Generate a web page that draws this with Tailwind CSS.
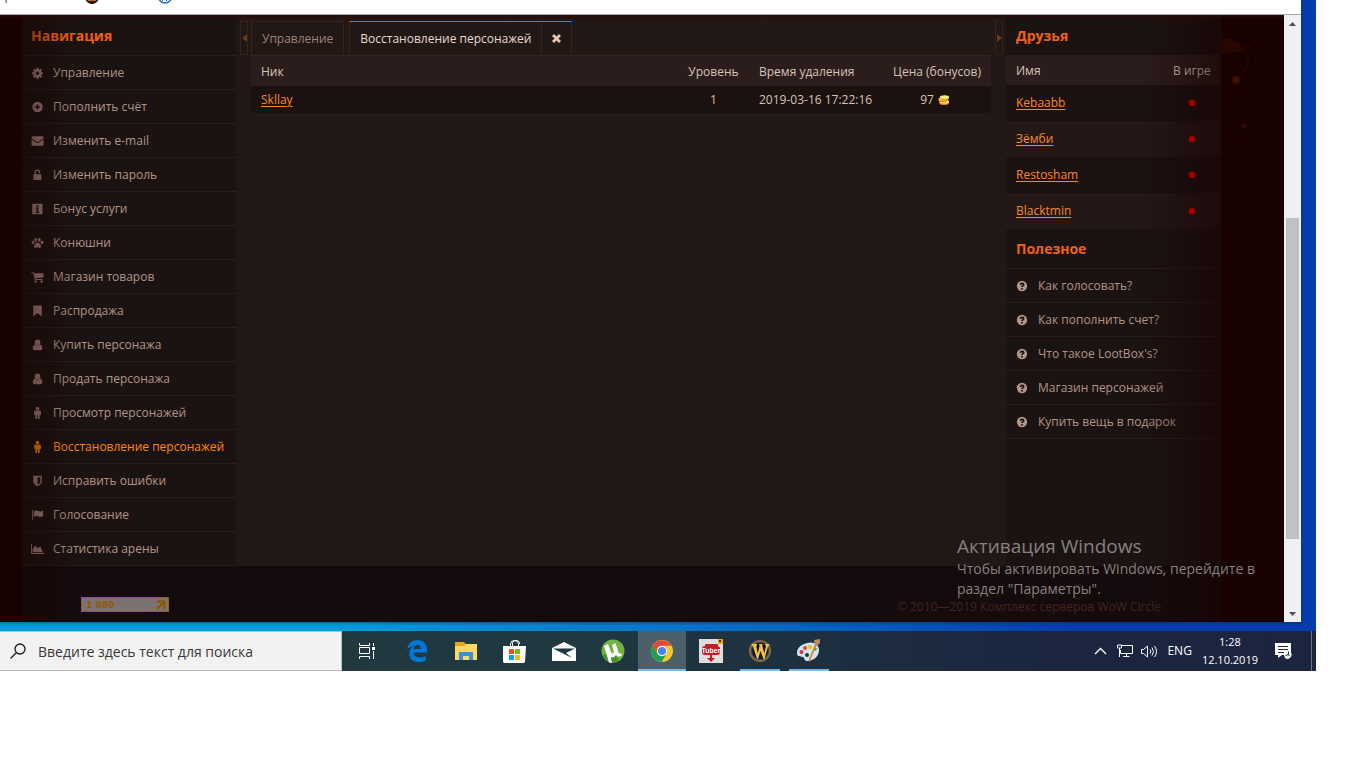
<!DOCTYPE html>
<html lang="ru">
<head>
<meta charset="utf-8">
<title>Восстановление персонажей</title>
<script src="https://cdn.jsdelivr.net/npm/@tailwindcss/browser@4"></script>
</head>
<body class="bg-white font-['Open_Sans','Noto_Sans',sans-serif] text-xs leading-4">

<svg class="hidden" aria-hidden="true">
  <symbol id="cog" viewBox="0 0 14 14"><path fill-rule="evenodd" d="M5.900 1h2.200l.3 1.700 1 .4 1.400-1 1.500 1.500-1 1.400.4 1 1.600.3v2.100l-1.600.3-.4 1 1 1.400-1.500 1.600-1.400-1-1 .4-.3 1.600H5.900l-.3-1.600-1-.4-1.400 1-1.500-1.600 1-1.400-.4-1L.7 8.400V6.300L2.300 6l.4-1-1-1.400 1.500-1.500 1.400 1 1-.4zM7 5.300a2 2 0 1 0 0 4 2 2 0 0 0 0-4z"/></symbol>
  <symbol id="plus" viewBox="0 0 14 14"><path fill-rule="evenodd" d="M7 1a6 6 0 1 0 0 12A6 6 0 0 0 7 1zM6 4h2v2h2v2H8v2H6V8H4V6h2z"/></symbol>
  <symbol id="mail" viewBox="0 0 14 14"><path d="M0 2.800C0 2 .5 1.500 1.200 1.500h11.600c.7 0 1.200.5 1.200 1.200 0 .9-.6 1.500-1.300 2L8.200 7.900c-.8.600-1.600.600-2.400 0L1.300 4.700C.6 4.200 0 3.600 0 2.800zM0 5l5.200 3.800c1.200.9 2.400.9 3.600 0L14 5v6.500c0 .6-.5 1-1 1H1c-.5 0-1-.4-1-1z"/></symbol>
  <symbol id="lock" viewBox="0 0 14 14"><path d="M3.500 6.200V4a3.300 3.300 0 0 1 6.600 0v1H8.700V4a1.900 1.900 0 0 0-3.800 0v2.200h5.800c.4 0 .8.3.8.8v5c0 .5-.4.8-.8.8H3c-.5 0-.8-.3-.8-.8V7c0-.4.300-.8.700-.8z"/></symbol>
  <symbol id="info" viewBox="0 0 14 14"><path fill-rule="evenodd" d="M.8 1h12v12h-12zM5.600 2.500v2h2.800v-2zM5 5.200v1.300h1v3.700H5v1.500h4v-1.500H8V5.200z"/></symbol>
  <symbol id="paw" viewBox="0 0 14 14"><ellipse cx="4.900" cy="3.300" rx="1.600" ry="2.200"/><ellipse cx="9.100" cy="3.300" rx="1.600" ry="2.200"/><ellipse cx="1.800" cy="6.400" rx="1.600" ry="2" transform="rotate(-20 1.800 6.400)"/><ellipse cx="12.200" cy="6.400" rx="1.600" ry="2" transform="rotate(20 12.200 6.400)"/><path d="M7 6.400c2 0 4.100 2.800 4.100 4.700 0 1.300-.9 1.600-1.900 1.600S7.800 12 7 12s-1.300.7-2.300.7-1.800-.400-1.800-1.600C2.900 9.200 5 6.400 7 6.400z"/></symbol>
  <symbol id="cart" viewBox="0 0 14 14"><path d="M0 1.500h2.600l.5 1.200H14v5L5 8.500l.2.900h7.600v1.200H4L2.100 2.700H0z"/><circle cx="5" cy="12.200" r="1.400"/><circle cx="11.800" cy="12.200" r="1.400"/></symbol>
  <symbol id="mark" viewBox="0 0 14 14"><path d="M2 1.500C2 1 2.400.5 3 .5h8c.6 0 1 .5 1 1V13.300L7 9.300l-5 4z"/></symbol>
  <symbol id="user" viewBox="0 0 14 14"><circle cx="7" cy="4" r="3.300"/><path d="M4 6.300c2 1.600 4 1.600 6 0 1.700.4 2.600 2.200 2.600 4.200 0 1.500-.8 2.500-1.900 2.500H3.300c-1.100 0-1.900-1-1.900-2.500 0-2 .9-3.800 2.600-4.200z"/></symbol>
  <symbol id="male" viewBox="0 0 14 14"><circle cx="7" cy="1.900" r="2"/><path d="M4.500 4h5c.8 0 1.500.7 1.500 1.500v3.300c0 1-1.400 1-1.400 0V13c0 1.300-2.200 1.300-2.200 0V9.500h-.8V13c0 1.300-2.200 1.300-2.200 0V8.800c0 1-1.400 1-1.400 0V5.500C3 4.700 3.700 4 4.500 4z"/></symbol>
  <symbol id="shield" viewBox="0 0 14 14"><path fill-rule="evenodd" d="M2 1h10v6.200c0 2.800-2.700 4.700-5 5.800-2.300-1.100-5-3-5-5.800zM7 2.500v8.800c2-1.200 3.400-2.400 3.400-4.100V2.500z"/></symbol>
  <symbol id="flag" viewBox="0 0 14 14"><path d="M.3 1.300h1.400V13H.8V3zM2.500 2.900C5.300 1.200 6.800 1.700 8.200 2.400c1.900.9 3.400.4 5.300-.6v6.300c-1.900 1-3.600 1.500-5.400.6-1.700-.8-3.300-.6-5.600.700z"/></symbol>
  <symbol id="chart" viewBox="0 0 16 14"><path d="M0 1h1.200v11H16v1.200H0zM2 11V7l3-4 3.500 3L11.500 4l3 7z"/></symbol>
  <symbol id="help" viewBox="0 0 14 14"><path fill-rule="evenodd" d="M7 1a6 6 0 1 0 0 12A6 6 0 0 0 7 1zM4.300 5.400C4.500 3.900 5.600 3 7.100 3c1.600 0 2.800.9 2.800 2.300 0 1.900-1.800 1.900-1.800 3H6c0-1.900 1.700-2.100 1.700-2.900 0-.7-1.200-.7-1.500.300zM6 9.200h2.100v1.900H6z"/></symbol>
</svg>

<div class="mr-[50px] bg-[linear-gradient(90deg,#009bdc_0%,#009bdc_25%,#0067c2_60%,#063cae_82%,#063cae_100%)]">
  <!-- Browser window -->
  <div class="mr-[15px] bg-white shadow-[0_1px_3px_#00205080]">
    <div class="h-[14px] overflow-hidden">
      <svg width="180" height="5" viewBox="0 0 180 5" aria-hidden="true"><path d="M5 0h1v3H5z" fill="#f0b070"/><path d="M6 0h1v3H6z" fill="#3d9be0"/><circle cx="92" cy="-3" r="7" fill="#20150d"/><path d="M88 0l2 1 2-1 2 1 2-1" stroke="#e08a20" fill="none"/><circle cx="165" cy="-3.500" r="6.500" fill="#fff" stroke="#2c6ecb" stroke-width="1.500"/><path d="M162 0h1v1h-1zM166 0h1v1h-1z" fill="#2c6ecb"/></svg>
    </div>
    <div class="flex border-t border-[#a8a8a8]">
      <div class="relative min-w-0 flex-1 bg-[#170101]">
        <div class="relative mr-[63px] ml-[22px] flex bg-[#211715]">
          <!-- Navigation -->
          <nav class="w-[214px] shrink-0 bg-[#1b1311] text-[#b39488]">
            <h2 class="flex h-10 items-center pt-0.5 pl-[9px] text-sm font-bold text-[#f26110]">Навигация</h2>
            <ul class="border-b border-[#2a1d1a] fill-[#a07c74] [&_a]:flex [&_a]:h-[34px] [&_a]:items-center [&_a]:gap-[9px] [&_a]:border-t [&_a]:border-[#2a1d1a] [&_a]:pl-[9px] [&_svg]:h-3 [&_svg]:w-[13px]">
              <li><a href="#"><svg><use href="#cog"/></svg>Управление</a></li>
              <li><a href="#"><svg><use href="#plus"/></svg>Пополнить счёт</a></li>
              <li><a href="#"><svg><use href="#mail"/></svg>Изменить e-mail</a></li>
              <li><a href="#"><svg><use href="#lock"/></svg>Изменить пароль</a></li>
              <li><a href="#"><svg><use href="#info"/></svg>Бонус услуги</a></li>
              <li><a href="#"><svg><use href="#paw"/></svg>Конюшни</a></li>
              <li><a href="#"><svg><use href="#cart"/></svg>Магазин товаров</a></li>
              <li><a href="#"><svg><use href="#mark"/></svg>Распродажа</a></li>
              <li><a href="#"><svg><use href="#user"/></svg>Купить персонажа</a></li>
              <li><a href="#"><svg><use href="#user"/></svg>Продать персонажа</a></li>
              <li><a href="#"><svg><use href="#male"/></svg>Просмотр персонажей</a></li>
              <li class="fill-[#f08008] text-[#ff8800]"><a href="#" aria-current="page"><svg><use href="#male"/></svg>Восстановление персонажей</a></li>
              <li><a href="#"><svg><use href="#shield"/></svg>Исправить ошибки</a></li>
              <li><a href="#"><svg><use href="#flag"/></svg>Голосование</a></li>
              <li><a href="#"><svg><use href="#chart"/></svg>Статистика арены</a></li>
            </ul>
          </nav>

          <div class="flex w-[15px] shrink-0 items-start pt-1.5 pl-1">
            <button aria-label="Свернуть навигацию" class="flex h-[34px] w-2 items-center justify-center border border-[#35221f]"><svg class="h-2 w-[5px] shrink-0 fill-[#6b3a18]" viewBox="0 0 5 8"><path d="M5 0v8L0 4z"/></svg></button>
          </div>

          <!-- Content -->
          <main class="min-w-0 flex-1 pt-1.5">
            <div class="flex h-[34px] gap-[5px] text-[#9f8379]">
              <a href="#" class="flex items-center border border-b-0 border-[#35221f] px-[10px]">Управление</a>
              <div class="flex border border-b-0 border-[#35221f] border-t-[#d8600c] text-[#e8dad0]">
                <a href="#" class="flex items-center px-[10px]">Восстановление персонажей</a>
                <button aria-label="Закрыть вкладку" class="flex w-[30px] items-center justify-center border-l border-[#35221f]"><svg class="size-[9px]" viewBox="0 0 9 9"><path d="M1 1l7 7M8 1L1 8" stroke="#e8c8b4" stroke-width="2.800"/></svg></button>
              </div>
            </div>
            <table class="w-full border-t border-[#35221f] text-[#d8c4b8]">
              <thead><tr class="h-[30px] bg-[#2b1d1c]">
                <th class="px-[10px] pt-0.5 text-left font-normal">Ник</th>
                <th class="w-[71px] pt-0.5 font-normal whitespace-nowrap">Уровень</th>
                <th class="w-[134px] px-[10px] pt-0.5 text-left font-normal whitespace-nowrap">Время удаления</th>
                <th class="w-[108px] pt-0.5 font-normal whitespace-nowrap">Цена (бонусов)</th>
              </tr></thead>
              <tbody><tr class="h-[27px] bg-[#1b110f]">
                <td class="px-[10px] pt-0.5"><a href="#" class="text-[#f58a2a] underline underline-offset-2">Skllay</a></td>
                <td class="pt-0.5 text-center">1</td>
                <td class="px-[10px] pt-0.5 whitespace-nowrap">2019-03-16 17:22:16</td>
                <td class="pt-0.5 pr-1"><span class="flex items-center justify-center gap-1">97 <svg width="12" height="10" viewBox="0 0 12 10" aria-label="бонусов"><ellipse cx="6" cy="7.500" rx="5" ry="2.500" fill="#e89418"/><ellipse cx="6.500" cy="6.500" rx="4.500" ry="2" fill="#ffe070"/><ellipse cx="5" cy="5" rx="4.500" ry="2.200" fill="#e08410"/><ellipse cx="5" cy="4" rx="4.500" ry="1.800" fill="#ffc848"/><ellipse cx="6.500" cy="3" rx="4.500" ry="2.300" fill="#f0a020"/><ellipse cx="6.500" cy="2" rx="4.500" ry="1.800" fill="#fff088"/></svg></span></td>
              </tr></tbody>
            </table>
          </main>

          <div class="flex w-[15px] shrink-0 items-start pt-1.5 pl-1">
            <button aria-label="Свернуть панель друзей" class="flex h-[34px] w-2 items-center justify-center border border-[#35221f]"><svg class="h-2 w-[5px] shrink-0 fill-[#6b3a18]" viewBox="0 0 5 8"><path d="M0 0v8l5-4z"/></svg></button>
          </div>

          <!-- Friends and help -->
          <aside class="w-[215px] shrink-0 bg-[#1b1311] text-[#b39488]">
            <h2 class="flex h-10 items-center pt-0.5 pl-[10px] text-sm font-bold text-[#f26110]">Друзья</h2>
            <table class="w-full">
              <thead><tr class="h-[30px] bg-[#2b1d1c] text-[#d8c4b8]"><th class="px-[10px] pt-0.5 text-left font-normal">Имя</th><th class="w-[58px] pt-0.5 font-normal">В игре</th></tr></thead>
              <tbody class="text-[#f58a2a]">
                <tr class="h-9 bg-[#1b110f]"><td class="px-[10px]"><a href="#" class="underline underline-offset-2">Kebaabb</a></td><td><span class="mx-auto block size-1.5 rounded-full bg-[#ff0000] shadow-[0_0_2px_#c00000]"></span></td></tr>
                <tr class="h-9 bg-[#231816]"><td class="px-[10px]"><a href="#" class="underline underline-offset-2">Зёмби</a></td><td><span class="mx-auto block size-1.5 rounded-full bg-[#ff0000] shadow-[0_0_2px_#c00000]"></span></td></tr>
                <tr class="h-9 bg-[#1b110f]"><td class="px-[10px]"><a href="#" class="underline underline-offset-2">Restosham</a></td><td><span class="mx-auto block size-1.5 rounded-full bg-[#ff0000] shadow-[0_0_2px_#c00000]"></span></td></tr>
                <tr class="h-9 bg-[#231816]"><td class="px-[10px]"><a href="#" class="underline underline-offset-2">Blacktmin</a></td><td><span class="mx-auto block size-1.5 rounded-full bg-[#ff0000] shadow-[0_0_2px_#c00000]"></span></td></tr>
              </tbody>
            </table>
            <h2 class="flex h-[39px] items-center pl-[10px] text-sm font-bold text-[#f26110]">Полезное</h2>
            <ul class="border-b border-[#2a1d1a] fill-[#b39488] [&_a]:flex [&_a]:h-[34px] [&_a]:items-center [&_a]:gap-[10px] [&_a]:border-t [&_a]:border-[#2a1d1a] [&_a]:pl-[10px] [&_svg]:size-3">
              <li><a href="#"><svg><use href="#help"/></svg>Как голосовать?</a></li>
              <li><a href="#"><svg><use href="#help"/></svg>Как пополнить счет?</a></li>
              <li><a href="#"><svg><use href="#help"/></svg>Что такое LootBox's?</a></li>
              <li><a href="#"><svg><use href="#help"/></svg>Магазин персонажей</a></li>
              <li><a href="#"><svg><use href="#help"/></svg>Купить вещь в подарок</a></li>
            </ul>
          </aside>
        </div>

        <footer class="relative mr-[63px] ml-[22px] flex h-14 items-start justify-between bg-[#150b0d] pt-[31px] pr-[60px] pl-[59px]">
          <a href="#" class="flex h-[15px] w-[88px] items-center justify-between border border-[#94600c] bg-[#7d7272] pr-0.5 pl-1 font-['DejaVu_Sans',sans-serif] text-[9px] leading-3 font-bold text-[#8f5a00]">1 880<svg class="size-[10px]" viewBox="0 0 10 10"><path d="M1 1.500h7.500V9M8 2L1 9" fill="none" stroke="#8a5600" stroke-width="2.200"/></svg></a>
          <p class="pt-0.5 text-[#43241f]">© 2010—2019 Комплекс серверов WoW Circle</p>
        </footer>

        <div class="pointer-events-none absolute inset-y-0 left-0 w-20 bg-linear-to-r from-[#170101]/65 to-[#170101]/0"></div>
        <div class="pointer-events-none absolute inset-y-0 right-0 w-36 bg-linear-to-l from-[#170101] to-[#170101]/0"></div>
        <div class="pointer-events-none absolute inset-x-0 top-0 h-1 bg-linear-to-b from-[#2a0a08] to-transparent"></div>

        <!-- Ember streaks in the page background -->
        <svg class="pointer-events-none absolute top-0 right-0 blur-[1px]" width="63" height="160" viewBox="0 0 63 160" fill="none" stroke="#5a1c08" aria-hidden="true"><path d="M0 25c8-3 18 3 20 11M0 37c10 1 15-2 20-1 6-4 12-9 20-15M22 36l-5-8M28 40c-3 12-4 20-14 26" opacity=".5"/><path d="M0 25c8-3 18 3 20 11l-20 1z" fill="#401005" stroke="none" opacity=".4"/><path d="M0 74c15 4 30 5 45 8M2 85c10 4 18 9 25 18M4 118c12 3 22 10 34 20" opacity=".25"/><circle cx="15" cy="65" r="4" fill="#6a2208" stroke="none" opacity=".5"/><circle cx="23" cy="111" r="3" fill="#5a1c08" stroke="none" opacity=".35"/></svg>
        <svg class="pointer-events-none absolute top-0 left-0" width="22" height="170" viewBox="0 0 22 170" fill="none" stroke="#4a1208" opacity=".2" aria-hidden="true"><path d="M22 60C8 70 2 85 0 95M22 108c-8 4-6 12 0 16M20 145l-12 14"/></svg>

        <!-- Activation watermark -->
        <div class="pointer-events-none absolute right-0 bottom-[23px] w-[327px] text-sm leading-5 text-[#87817f]">
          <p class="-mt-px mb-px text-[19px] leading-6">Активация Windows</p>
          <p>Чтобы активировать Windows, перейдите в<br>раздел "Параметры".</p>
        </div>
      </div>

      <!-- Scrollbar -->
      <div class="flex w-[17px] shrink-0 flex-col bg-[#f0f0f0]">
        <button aria-label="Прокрутить вверх" class="flex h-[17px] items-center justify-center"><svg width="7" height="4" viewBox="0 0 7 4"><path d="M0 4l3.500-4L7 4z" fill="#505050"/></svg></button>
        <div class="flex-[186]"></div>
        <div class="mx-0.5 flex-[321] bg-[#c1c1c1]"></div>
        <div class="flex-[66]"></div>
        <button aria-label="Прокрутить вниз" class="flex h-[17px] items-center justify-center"><svg width="7" height="4" viewBox="0 0 7 4"><path d="M0 0l3.500 4L7 0z" fill="#505050"/></svg></button>
      </div>
    </div>
  </div>

  <!-- Taskbar -->
  <div class="mt-[9px] flex h-10 items-stretch bg-linear-to-r from-[#203840] from-45% to-[#1b2540] to-80% text-white">
    <label class="flex w-[342px] shrink-0 items-center gap-3 border border-l-0 border-[#bcbcbc] bg-[#f2f2f2] pl-[10px]">
      <svg class="size-4 shrink-0" viewBox="0 0 16 16" fill="none" stroke="#1a1a1a" stroke-width="1.300"><circle cx="10" cy="6" r="5"/><path d="M6.500 9.500L.5 15.500"/></svg>
      <input type="text" aria-label="Поиск" placeholder="Введите здесь текст для поиска" class="min-w-0 flex-1 bg-transparent pt-0.5 text-sm placeholder:text-[#383838]">
    </label>
    <div class="flex gap-px pl-0.5">
      <button aria-label="Представление задач" class="grid w-12 place-items-center pr-0.5"><svg width="18" height="16" viewBox="0 0 18 16" fill="none" stroke="#fff"><path d="M1.500 0v2.500h10V0M1.500 16v-2.500h10V16M1.500 4.500h10v6h-10zM15.500 0v3M15.500 8v8"/><path d="M14 4h3v3h-3z" fill="#fff" stroke="none"/></svg></button>
      <button aria-label="Edge" class="grid w-12 place-items-center"><svg width="20" height="22" viewBox="0 0 20 22"><path d="M0 9.500C1 3.800 5 0 10.300 0 16.500 0 20 4.600 20 10v2.500H6.500c.3 3.600 3.300 5 6.500 5 2.200 0 4-.5 5.700-1.500v4.500c-2 1-4.300 1.500-6.700 1.500C6 22 2.200 18.600 2.200 13.500c0-3.500 2-6.300 5-7.800C4.300 5.900 1.700 7.400 0 9.500zm6.600-.6h7.300c0-2.500-1.400-3.900-3.500-3.900-2 0-3.500 1.600-3.800 3.900z" fill="#0078d7"/></svg></button>
      <button aria-label="Проводник" class="grid w-12 place-items-center"><svg width="22" height="18" viewBox="0 0 22 18"><path d="M0 0h9l2 2h11v16H0z" fill="#e8a317"/><path d="M0 4h9l2-2h11v16H0z" fill="#ffd766"/><path d="M4 10h14v8h-4v-4H8v4H4z" fill="#3f8fd8"/></svg></button>
      <button aria-label="Магазин" class="grid w-12 place-items-center pr-0.5"><svg width="23" height="23" viewBox="0 0 23 23"><path d="M0 6h23l-1 16-1 1H1l-1-1z" fill="#fff"/><path d="M7.500 7V4a4 3.500 0 0 1 8 0v3M9.500 6V3a3 2.500 0 0 1 7 1" fill="none" stroke="#fff"/><path d="M6 9h5v5H6z" fill="#f25022"/><path d="M12 9h5v5h-5z" fill="#7fba00"/><path d="M6 15h5v5H6z" fill="#00a4ef"/><path d="M12 15h5v5h-5z" fill="#ffb900"/></svg></button>
      <button aria-label="Почта" class="grid w-12 place-items-center"><svg width="24" height="19" viewBox="0 0 24 19"><path d="M0 6l12-6 12 6v13H0z" fill="#fff"/><path d="M1 6.500h22L14 11l6 5z" fill="#203840"/></svg></button>
      <button aria-label="µTorrent" class="grid w-12 place-items-center"><svg width="24" height="24" viewBox="0 0 24 24"><circle cx="12" cy="12" r="11.500" fill="#6fb344"/><path d="M1 16C5 22 12 25 18 21l-6-7z" fill="#498c2e"/><path d="M3 7l4-2 3 8c.8 2 3.200 1.500 2.800-.5L11 6l3.500-2 3 9.500c.5 1.200 1.500 1.300 2.500.5l1 2.500c-2 1.700-5 1.300-6-1-1 3-3.700 3.500-5.500 2.500L11 24l-3-.5z" fill="#fff"/></svg></button>
      <button aria-label="Chrome" class="grid w-12 place-items-center border-b-2 border-[#76b9ed] bg-[#4d5f68] pt-0.5"><svg width="22" height="22" viewBox="0 0 22 22"><circle cx="11" cy="11" r="11" fill="#fbc62a"/><path d="M1.500 5.500A11 11 0 0 1 20.500 5.800H11a5.200 5.200 0 0 0-5 6.500z" fill="#dd4b3e"/><path d="M1.500 5.500A11 11 0 0 0 10.600 22l4.600-7.800A5.200 5.200 0 0 1 6.300 13.300z" fill="#1c9d59"/><circle cx="11" cy="11" r="5" fill="#fff"/><circle cx="11" cy="11" r="4" fill="#4586f3"/></svg></button>
      <button aria-label="Tuber" class="grid w-12 place-items-center"><svg width="24" height="24" viewBox="0 0 24 24"><path d="M0 0h24v24H0z" fill="#dedede"/><path d="M19 0h5v5h-5z" fill="#f0a800"/><path d="M20 1h2v2h-2z" fill="#403000"/><rect x="6" y="5" width="13" height="4" rx="1" fill="#c41c22"/><rect x="3" y="7" width="18" height="9" rx="3" fill="#c41c22"/><path d="M11 16h2v3h3l-4 4-4-4h3z" fill="#c41c22"/><text x="12" y="14" text-anchor="middle" font-family="Liberation Sans Narrow, Liberation Sans" font-size="7" font-weight="bold" fill="#fff">Tuber</text></svg></button>
      <button aria-label="World of Warcraft" class="mx-1 grid w-10 place-items-center border-b-2 border-[#76b9ed] pt-0.5"><svg width="24" height="24" viewBox="0 0 24 24"><circle cx="12" cy="12" r="10" fill="#0d1526" stroke="#8a6a3c" stroke-width="2"/><circle cx="12" cy="12" r="8.500" fill="none" stroke="#3c4f70"/><path d="M3 5h6v1L8.300 7.500l1.500 7L11.500 7 11 5h3.500l-.3 1 2 8.500L18 7.300 17 5h5l-2 2.500L16.500 20h-1L12.500 12 10 20H9L5 7.500z" fill="#f3c13a"/></svg></button>
      <button aria-label="Paint" class="mx-1 grid w-10 place-items-center border-b-2 border-[#76b9ed] pt-0.5"><svg width="24" height="24" viewBox="0 0 24 24"><path d="M10 4c7-2 12 2 12 7 0 7-6 11-12 11-3 0-2-3-4-4-3-1-6 0-6-4C0 9 4 5.500 10 4z" fill="#cfe7f5"/><circle cx="4.500" cy="13" r="2" fill="#e0352c"/><circle cx="8" cy="9" r="2" fill="#d84a3a"/><circle cx="13" cy="8" r="2.300" fill="#f5c518"/><circle cx="18" cy="10" r="1.800" fill="#48a23a"/><circle cx="10" cy="16" r="2" fill="#203840"/><path d="M20 5l-7 17-1 1V20l6-15z" fill="#d9822b"/><path d="M17 1l6-1v4l-3 3-2-1z" fill="#b98a68"/></svg></button>
    </div>
    <div class="ml-auto flex items-center">
      <button aria-label="Скрытые значки" class="mr-[10px]"><svg width="13" height="8" viewBox="0 0 13 8"><path d="M1 7l5.500-5.500L12 7" fill="none" stroke="#fff" stroke-width="1.300"/></svg></button>
      <button aria-label="Сеть" class="mr-2"><svg width="16" height="14" viewBox="0 0 16 14" fill="none" stroke="#fff"><path d="M5 1.500h10.500v8H3.500V6M9.500 9.500v3M6 12.500h6.500M.5 1h4v3h-4zM2.500 4v9"/></svg></button>
      <button aria-label="Громкость" class="mr-[9px]"><svg width="17" height="13" viewBox="0 0 17 13" fill="none" stroke="#fff"><path d="M.5 4.500h2l4-3.500v11l-4-3.500h-2zM9 4.500q1.500 2 0 4M11 2.500q3 4 0 8M13.500 1q4 5.500 0 11"/></svg></button>
      <button class="mr-[10px]">ENG</button>
      <button class="mr-[17px] text-center text-[11px] leading-[18px]">1:28<br>12.10.2019</button>
      <button aria-label="Уведомления" class="mr-[19px]"><svg width="17" height="16" viewBox="0 0 17 16"><path d="M0 0h16v12H7l-4 3v-3H0z" fill="#fff"/><path d="M3 3.500h10M3 6.500h10M3 9.500h6" stroke="#1b2540"/><path d="M9 12a4 4 0 0 1 5-4 3.500 3.500 0 0 1 2.500 4 4 4 0 0 1-6.500 3z" fill="#fff"/><path d="M13.500 8.500a3 3 0 0 1-3 4M13 11l1.500 2" stroke="#1b2540" fill="none"/></svg></button>
      <div class="mr-1 h-10 w-px bg-[#6b7486]"></div>
    </div>
  </div>
</div>
</body>
</html>
